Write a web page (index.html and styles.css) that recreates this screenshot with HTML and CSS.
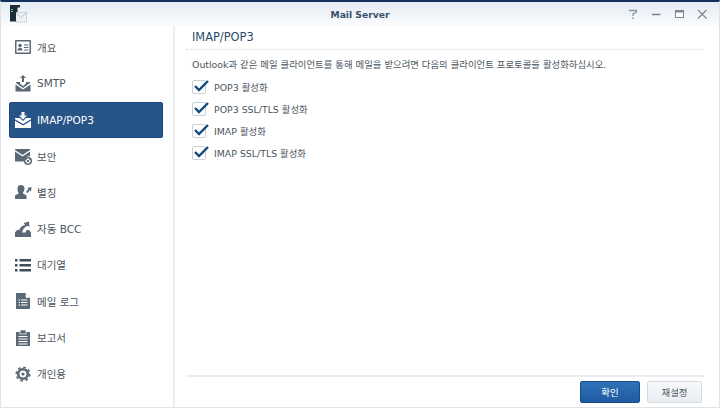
FILE: index.html
```html
<!DOCTYPE html>
<html lang="ko">
<head>
    <meta charset="UTF-8">
    <title>Mail Server</title>
    <link rel="stylesheet" href="styles.css">
</head>
<body>
    <div class="window">
        <div class="titlebar">
            <svg class="app-icon" width="27" height="24" viewBox="0 0 27 24">
                <rect x="14.500" y="10.500" width="11" height="9.500" fill="#eef2f5" stroke="#aab6c0" stroke-dasharray="1 1"/>
                <path d="M15 11l5 4.500 5-4.500" fill="none" stroke="#b9c2c9"/>
                <path d="M9 3h10v2.500h-2.500V10H15v9.500H9z" fill="#1d2b3a"/>
                <rect x="10" y="7" width="2" height="1" fill="#4fd08a"/>
                <rect x="10" y="9" width="2" height="1" fill="#4fd08a"/>
            </svg>
            <div class="title">Mail Server</div>
            <div class="win-btns">
                <svg width="12" height="12" viewBox="0 0 12 12"><path d="M2 2.500h7.500v1.500L6 6v2" fill="none" stroke="#8d99a5" stroke-width="1.300"/><path d="M5.200 9.500h1.600v1.500H5.200z" fill="#8d99a5"/></svg>
                <svg width="12" height="12" viewBox="0 0 12 12"><path d="M2 6.500h8.500" stroke="#6f7c89" stroke-width="1.400"/></svg>
                <svg width="12" height="12" viewBox="0 0 12 12"><rect x="2.500" y="2.500" width="8" height="7" fill="#fff" stroke="#7c8894"/><rect x="2" y="2" width="9" height="2.500" fill="#7c8894"/></svg>
                <svg width="12" height="12" viewBox="0 0 12 12"><path d="M2 2l8.500 8.500M10.500 2L2 10.500" stroke="#7c8894" stroke-width="1.200"/></svg>
            </div>
        </div>
        <div class="main">
            <ul class="sidebar">
                <li class="nav-item">
                    <svg class="nav-icon" viewBox="0 0 18 18"><rect x="1" y="2" width="16" height="14" rx="1" fill="#5b6977"/><rect x="2.500" y="3.500" width="13" height="11" fill="#fff"/><circle cx="6" cy="7.500" r="1.700" fill="#5b6977"/><path d="M3.500 12.500c0-2 1-2.800 2.500-2.800s2.500.8 2.500 2.800z" fill="#5b6977"/><path d="M10 7h4.500M10 9.500h4.500M10 12h4.500" stroke="#5b6977"/></svg>
                    <span>개요</span>
                </li>
                <li class="nav-item">
                    <svg class="nav-icon" viewBox="0 0 18 18"><path d="M9 1l3 3h-2v4H8V4H6z" fill="#5b6977"/><path d="M2 8h4v1.500l3 2.500 3-2.500V8h4v1l-7 5-7-5z" fill="#5b6977"/><path d="M1.500 10.500L9 15.500l7.500-5v7h-15z" fill="#5b6977"/></svg>
                    <span>SMTP</span>
                </li>
                <li class="nav-item active">
                    <svg class="nav-icon" viewBox="0 0 18 18"><path d="M7.500 1h3v3.500h2.500L9 8.500 5 4.500h2.500z" fill="#fff"/><path d="M1 7h5l3 3 3-3h5v1.200L9 13 1 8.200z" fill="#fff"/><path d="M1 9.700L9 14.500l8-4.800V17H1z" fill="#fff"/></svg>
                    <span>IMAP/POP3</span>
                </li>
                <li class="nav-item">
                    <svg class="nav-icon" viewBox="0 0 18 18"><path d="M1 2h15v1L8.500 8 1 3z" fill="#5b6977"/><path d="M1 4.500L8.500 9.500 16 4.500v4.700a5 5 0 0 0-5.500 5.300H1z" fill="#5b6977"/><circle cx="14" cy="14" r="3.300" fill="none" stroke="#5b6977" stroke-width="1.500"/><path d="M12.300 12.300l3.400 3.400M15.700 12.300l-3.400 3.400" stroke="#5b6977"/></svg>
                    <span>보안</span>
                </li>
                <li class="nav-item">
                    <svg class="nav-icon" viewBox="0 0 18 18"><path d="M3.500 5.500a3.500 3.500 0 0 1 7 0c0 2-1 3.500-1.500 4v1l3.500 2V16H1v-3.500l3.500-2v-1C4 9 3.500 7.500 3.500 5.500z" fill="#5b6977"/><path d="M12 9l2.500-3-1.500-1 4.500-1-.5 4.500-1.200-1.200L13.500 10z" fill="#5b6977"/></svg>
                    <span>별칭</span>
                </li>
                <li class="nav-item">
                    <svg class="nav-icon" viewBox="0 0 18 18"><path d="M1 12.500L3 10h2.500l1 2.500h5l1-2.500H15l2 2.500V17H1z" fill="#5b6977"/><path d="M5 13c-.5-4 2-7 6-8L9.800 3 15 1.500 15.500 7l-1.800-1.200C11 7 8.500 9 8 13z" fill="#5b6977"/></svg>
                    <span>자동 BCC</span>
                </li>
                <li class="nav-item">
                    <svg class="nav-icon" viewBox="0 0 18 18"><path d="M1 3h2.500v2.500H1zM1 8h2.500v2.500H1zM1 13h2.500v2.500H1z" fill="#404d5a"/><path d="M5.500 3H17v2.500H5.500zM5.500 8H17v2.500H5.500zM5.500 13H17v2.500H5.500z" fill="#404d5a"/></svg>
                    <span>대기열</span>
                </li>
                <li class="nav-item">
                    <svg class="nav-icon" viewBox="0 0 18 18"><path d="M2 1h10l4 4.500V17H2z" fill="#5b6977"/><path d="M12 1v4.500h4" fill="#fff" stroke="#fff" stroke-width=".6"/><path d="M4.500 8h1.500M4.500 10.500h1.500M4.500 13h1.500M7 8h6.500M7 10.500h6.500M7 13h6.500" stroke="#fff"/></svg>
                    <span>메일 로그</span>
                </li>
                <li class="nav-item">
                    <svg class="nav-icon" viewBox="0 0 18 18"><rect x="2" y="3" width="14" height="14" fill="#5b6977"/><rect x="6" y="1" width="6" height="4" fill="#5b6977" stroke="#fff" stroke-width=".7"/><path d="M4.500 7.500h9M4.500 10h9M4.500 12.500h9M4.500 15h9" stroke="#fff"/></svg>
                    <span>보고서</span>
                </li>
                <li class="nav-item">
                    <svg class="nav-icon" viewBox="0 0 18 18"><circle cx="9" cy="9" r="4.800" fill="none" stroke="#5b6977" stroke-width="2.600"/><circle cx="9" cy="9" r="6.800" fill="none" stroke="#5b6977" stroke-width="1.600" stroke-dasharray="2.670 2.670"/><circle cx="9" cy="9" r="1.600" fill="#5b6977"/></svg>
                    <span>개인용</span>
                </li>
            </ul>
            <div class="content">
                <div class="panel">
                    <h2 class="panel-title">IMAP/POP3</h2>
                    <p class="desc">Outlook과 같은 메일 클라이언트를 통해 메일을 받으려면 다음의 클라이언트 프로토콜을 활성화하십시오.</p>
                    <div class="check-row"><span class="checkbox"><svg width="18" height="14" viewBox="0 0 18 14"><path d="M2 7l4 4 9-9" fill="none" stroke="#11497f" stroke-width="2.400"/></svg></span>POP3 활성화</div>
                    <div class="check-row"><span class="checkbox"><svg width="18" height="14" viewBox="0 0 18 14"><path d="M2 7l4 4 9-9" fill="none" stroke="#11497f" stroke-width="2.400"/></svg></span>POP3 SSL/TLS 활성화</div>
                    <div class="check-row"><span class="checkbox"><svg width="18" height="14" viewBox="0 0 18 14"><path d="M2 7l4 4 9-9" fill="none" stroke="#11497f" stroke-width="2.400"/></svg></span>IMAP 활성화</div>
                    <div class="check-row"><span class="checkbox"><svg width="18" height="14" viewBox="0 0 18 14"><path d="M2 7l4 4 9-9" fill="none" stroke="#11497f" stroke-width="2.400"/></svg></span>IMAP SSL/TLS 활성화</div>
                </div>
                <div class="footer">
                    <button class="btn btn-primary">확인</button>
                    <button class="btn">재설정</button>
                </div>
            </div>
        </div>
    </div>
</body>
</html>
```

FILE: styles.css
```css
* {
    box-sizing: border-box;
}

body {
    margin: 0;
    width: 720px;
    height: 408px;
    overflow: hidden;
    font-family: "DejaVu Sans", "Noto Sans CJK KR", sans-serif;
    font-size: 9.4px;
    color: #4a5560;
    background-color: #fff;
}

.window {
    height: 408px;
    display: flex;
    flex-direction: column;
    border: 1px solid #dfe3e6;
    border-top: 2px solid #14305c;
}

.titlebar {
    flex: 0 0 24px;
    position: relative;
    display: flex;
    align-items: center;
    background: linear-gradient(#e4ebf2, #fbfcfd);
}

.app-icon {
    flex: none;
}

.title {
    position: absolute;
    left: 0;
    right: 0;
    text-align: center;
    font-size: 9.2px;
    font-weight: bold;
    color: #37506b;
}

.win-btns {
    margin-left: auto;
    margin-right: 11px;
    display: flex;
    gap: 11px;
}

.main {
    flex: 1;
    display: flex;
    min-height: 0;
}

.sidebar {
    width: 174px;
    margin: 0;
    padding: 3px 10px 0 8px;
    list-style: none;
    border-right: 2px solid #ebedef;
}

.nav-item {
    height: 36.3px;
    display: flex;
    align-items: center;
    gap: 5px;
    padding-left: 5px;
    font-size: 10.5px;
    color: #4a5560;
    border-radius: 2px;
}

.nav-item.active {
    color: #fff;
    background-color: #285588;
    border: 1px solid #1d4474;
    padding-left: 4px;
}

.nav-icon {
    width: 18px;
    height: 18px;
    flex: none;
}

.content {
    flex: 1;
    display: flex;
    flex-direction: column;
    padding: 0 15px 0 11px;
}

.panel {
    flex: 1;
}

.panel-title {
    margin: 0;
    height: 24px;
    padding: 4px 0 0 6px;
    font-size: 11.4px;
    font-weight: normal;
    color: #2a4a6b;
    border-bottom: 1px dotted #d5dbe1;
}

.desc {
    margin: 9px 0 5px 6px;
    line-height: 12px;
}

.check-row {
    height: 22px;
    display: flex;
    align-items: center;
    gap: 8px;
    margin-left: 6px;
}

.checkbox {
    width: 14px;
    height: 14px;
    flex: none;
    background-color: #fff;
    border: 1px solid #c9d0d6;
    border-radius: 2px;
}

.checkbox svg {
    display: block;
    margin: -2px 0 0 0;
}

.footer {
    flex: 0 0 32px;
    display: flex;
    justify-content: flex-end;
    align-items: flex-start;
    gap: 7px;
    padding: 4px 2px 0 0;
    border-top: 2px solid #ebedef;
}

.btn {
    width: 55px;
    height: 22px;
    padding: 0;
    font-family: inherit;
    font-size: 9.4px;
    color: #4a5560;
    background: linear-gradient(#f7f9fb, #e9eef3);
    border: 1px solid #d5dce3;
    border-radius: 2px;
}

.btn-primary {
    width: 60px;
    color: #fff;
    background: linear-gradient(#2f72b8, #1f5ba0);
    border-color: #194c88;
}
```
